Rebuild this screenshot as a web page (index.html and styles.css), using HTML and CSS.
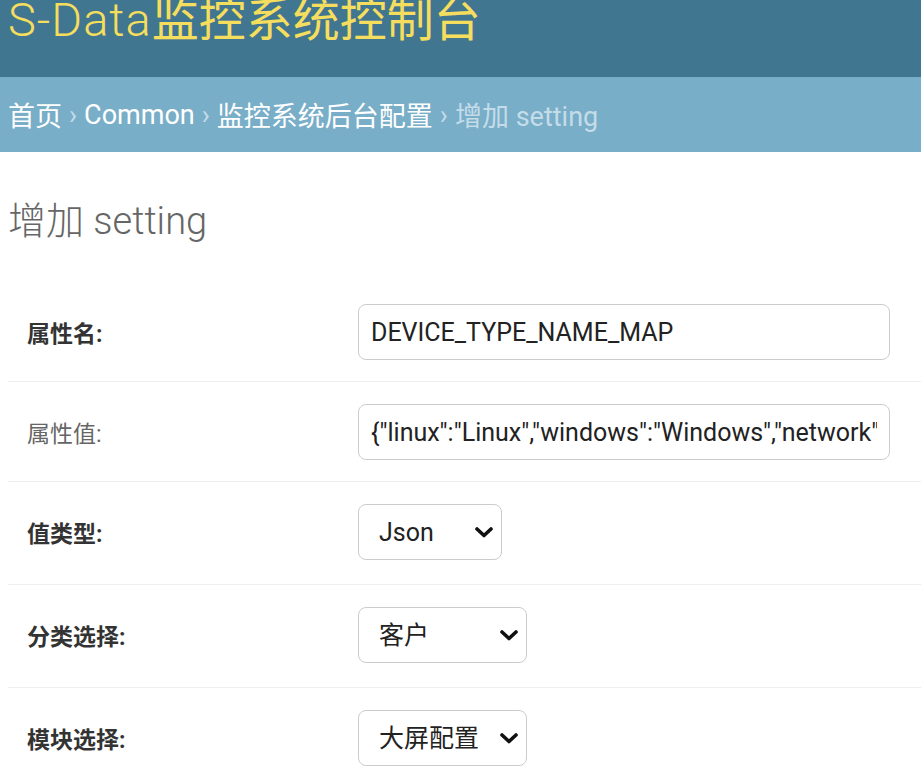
FILE: index.html
```html
<!DOCTYPE html>
<html lang="zh-CN">
<head>
<meta charset="utf-8">
<title>增加 setting | S-Data监控系统控制台</title>
<link rel="stylesheet" href="styles.css">
</head>
<body>
<header class="header">
  <h1 class="brand"><span class="brand-latin">S-Data</span><span class="brand-cjk">监控系统控制台</span></h1>
</header>
<nav class="breadcrumbs">
  <a class="crumb" href="#">首页</a><span class="sep">›</span><a class="crumb" href="#">Common</a><span class="sep">›</span><a class="crumb" href="#">监控系统后台配置</a><span class="sep">›</span><span class="current">增加 setting</span>
</nav>
<main class="content">
  <h2 class="page-title">增加 setting</h2>
  <form class="form">
    <div class="row">
      <label class="label required">属性名:</label>
      <input class="text-input" type="text" value="DEVICE_TYPE_NAME_MAP">
    </div>
    <div class="row">
      <label class="label">属性值:</label>
      <input class="text-input" type="text" value='{"linux":"Linux","windows":"Windows","network":"Network"}'>
    </div>
    <div class="row row-select">
      <label class="label required">值类型:</label>
      <div class="select-wrap select-sm">
        <select class="select"><option>Json</option></select>
        <svg class="chevron" viewBox="0 0 18 11" width="18" height="11"><path d="M2 2 L9 8.5 L16 2" fill="none" stroke="#111" stroke-width="3.6" stroke-linecap="round" stroke-linejoin="round"/></svg>
      </div>
    </div>
    <div class="row row-select">
      <label class="label required">分类选择:</label>
      <div class="select-wrap select-md">
        <select class="select"><option>客户</option></select>
        <svg class="chevron" viewBox="0 0 18 11" width="18" height="11"><path d="M2 2 L9 8.5 L16 2" fill="none" stroke="#111" stroke-width="3.6" stroke-linecap="round" stroke-linejoin="round"/></svg>
      </div>
    </div>
    <div class="row row-select">
      <label class="label required">模块选择:</label>
      <div class="select-wrap select-md">
        <select class="select"><option>大屏配置</option></select>
        <svg class="chevron" viewBox="0 0 18 11" width="18" height="11"><path d="M2 2 L9 8.5 L16 2" fill="none" stroke="#111" stroke-width="3.6" stroke-linecap="round" stroke-linejoin="round"/></svg>
      </div>
    </div>
  </form>
</main>
</body>
</html>
```

FILE: styles.css
```css
* { box-sizing: border-box; }

html, body {
  margin: 0;
  padding: 0;
  background: #fff;
  overflow: hidden;
}

body {
  font-family: Roboto, "Noto Sans CJK SC", "Noto Sans", sans-serif;
  color: #333;
  width: 921px;
}

.header {
  height: 77px;
  background: #417690;
  padding: 0 8px;
  overflow: hidden;
}

.brand {
  margin: 0;
  font-size: 47px;
  line-height: 40px;
  font-weight: 300;
  color: #f5dd5d;
  white-space: nowrap;
}

.brand-latin {
  letter-spacing: 1px;
}

.brand-cjk {
  font-weight: 400;
}

.breadcrumbs {
  height: 75px;
  background: #79aec8;
  padding: 0 8px;
  display: flex;
  align-items: center;
  font-size: 27px;
  color: #c4dce8;
  white-space: nowrap;
}

.crumb {
  color: #fff;
  text-decoration: none;
}

.sep {
  margin: 0 7px;
}

.current {
  color: #c4dce8;
}

.content {
  padding: 0 0 0 8px;
}

.page-title {
  margin: 47px 0 0;
  font-size: 38px;
  line-height: 44px;
  font-weight: 300;
  color: #666;
}

.form {
  margin-top: 39px;
}

.row {
  display: flex;
  align-items: center;
  padding: 22px 0 21px 19px;
  border-bottom: 1px solid #eee;
  width: 920px;
}

.row-select {
  padding-bottom: 24px;
}

.label {
  width: 331px;
  flex: none;
  font-size: 23px;
  color: #666;
  font-weight: 400;
}

.label.required {
  color: #333;
  font-weight: 700;
}

.text-input {
  width: 532px;
  height: 56px;
  border: 1px solid #ccc;
  border-radius: 8px;
  padding: 0 12px;
  font-family: Roboto, "Noto Sans CJK SC", sans-serif;
  font-size: 25px;
  color: #222;
  background: #fff;
  outline: none;
}

.select-wrap {
  position: relative;
  height: 56px;
}

.select-sm { width: 144px; }
.select-md { width: 169px; }

.select {
  -webkit-appearance: none;
  appearance: none;
  width: 100%;
  height: 56px;
  border: 1px solid #ccc;
  border-radius: 8px;
  padding: 0 0 0 20px;
  font-family: Roboto, "Noto Sans CJK SC", sans-serif;
  font-size: 25px;
  color: #222;
  background: #fff;
  outline: none;
}

.chevron {
  position: absolute;
  right: 9px;
  top: 23px;
  pointer-events: none;
}
```
